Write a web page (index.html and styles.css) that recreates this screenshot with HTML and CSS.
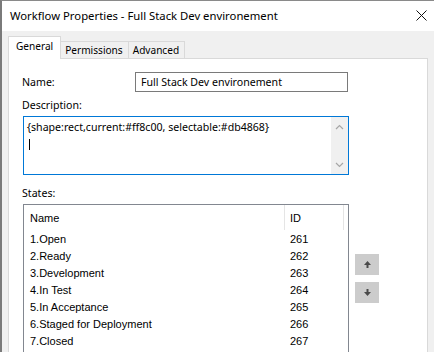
FILE: index.html
```html
<!DOCTYPE html>
<html>
<head>
<meta charset="utf-8">
<link rel="stylesheet" href="styles.css">
</head>
<body>
<div class="window">
  <div class="titlebar">
    <span class="title">Workflow Properties - Full Stack Dev environement</span>
    <svg class="close" width="11" height="11" viewBox="0 0 11 11"><path d="M0.5 0.5 L10.5 10.5 M10.5 0.5 L0.5 10.5" stroke="#111" stroke-width="1" fill="none"/></svg>
  </div>
  <div class="content">
    <div class="tabs">
      <div class="tab active">General</div>
      <div class="tab">Permissions</div>
      <div class="tab">Advanced</div>
    </div>
    <div class="panel">
      <div class="row name-row">
        <span class="label">Name:</span>
        <div class="input">Full Stack Dev environement</div>
      </div>
      <div class="label desc-label">Description:</div>
      <div class="textarea">
        <div class="ta-text">
          <div>{shape:rect,current:#ff8c00, selectable:#db4868}</div>
          <div class="caret-line"><span class="caret"></span></div>
        </div>
        <div class="vscroll">
          <svg width="9" height="6" viewBox="0 0 9 6"><path d="M1 5 L4.5 1.5 L8 5" stroke="#a6a6a6" stroke-width="1.2" fill="none"/></svg>
          <svg width="9" height="6" viewBox="0 0 9 6"><path d="M1 1 L4.5 4.5 L8 1" stroke="#a6a6a6" stroke-width="1.2" fill="none"/></svg>
        </div>
      </div>
      <div class="label states-label">States:</div>
      <div class="states">
        <div class="list">
          <div class="list-head">
            <div class="col-name">Name</div>
            <div class="col-id">ID</div>
            <div class="col-rest"></div>
          </div>
          <div class="list-row"><div class="col-name">1.Open</div><div class="col-id">261</div></div>
          <div class="list-row"><div class="col-name">2.Ready</div><div class="col-id">262</div></div>
          <div class="list-row"><div class="col-name">3.Development</div><div class="col-id">263</div></div>
          <div class="list-row"><div class="col-name">4.In Test</div><div class="col-id">264</div></div>
          <div class="list-row"><div class="col-name">5.In Acceptance</div><div class="col-id">265</div></div>
          <div class="list-row"><div class="col-name">6.Staged for Deployment</div><div class="col-id">266</div></div>
          <div class="list-row"><div class="col-name">7.Closed</div><div class="col-id">267</div></div>
          <div class="list-row"><div class="col-name">&nbsp;</div><div class="col-id"></div></div>
        </div>
        <div class="movers">
          <div class="mbtn"><svg width="9" height="9" viewBox="0 0 9 9"><path d="M4.5 1 L8 5 L5.5 5 L5.5 8 L3.5 8 L3.5 5 L1 5 Z" fill="#4a4a4a"/></svg></div>
          <div class="mbtn"><svg width="9" height="9" viewBox="0 0 9 9"><path d="M4.5 8 L8 4 L5.5 4 L5.5 1 L3.5 1 L3.5 4 L1 4 Z" fill="#4a4a4a"/></svg></div>
        </div>
      </div>
    </div>
  </div>
</div>
</body>
</html>
```
FILE: styles.css
```css
html, body {
  margin: 0;
  padding: 0;
}
body {
  width: 434px;
  height: 352px;
  overflow: hidden;
  background: #f0f0f0;
  font-family: "Noto Sans", "Open Sans", sans-serif;
  font-size: 10.6px;
  color: #000;
}
.window {
  height: 352px;
  border-left: 2px solid #7a7a7a;
  border-top: 1px solid #8a8a8a;
  box-sizing: border-box;
  background: #f0f0f0;
  overflow: hidden;
}
.titlebar {
  height: 30px;
  background: #fff;
  display: flex;
  align-items: center;
  justify-content: space-between;
  padding: 0 8px 0 8px;
}
.title {
  font-size: 11.3px;
  color: #000;
  padding-bottom: 1px;
}
.close {
  margin-right: -1px;
  margin-bottom: 1px;
}
.content {
  padding: 6px 6px 0 6px;
}
.tabs {
  display: flex;
  align-items: flex-end;
  height: 21px;
  position: relative;
  z-index: 1;
  font-size: 10.1px;
}
.tab {
  height: 16px;
  line-height: 17px;
  padding: 0 5px 0 4px;
  background: #f0f0f0;
  border: 1px solid #d9d9d9;
  border-bottom: none;
  margin-left: -1px;
}
.tab.active {
  line-height: 19px;
  background: #fff;
  padding: 0 7px;
  margin-left: 0;
  margin-bottom: -1px;
  height: 22px;
}
.panel {
  background: #fff;
  border: 1px solid #d9d9d9;
  height: 300px;
  padding: 13px 0 0 13px;
  box-sizing: border-box;
}
.row {
  display: flex;
  align-items: center;
}
.name-row {
  height: 20px;
}
.label {
  width: 113px;
}
.input {
  width: 206px;
  height: 18px;
  line-height: 18px;
  border: 1px solid #7a7a7a;
  padding-left: 5px;
}
.desc-label {
  margin-top: 5px;
  height: 17px;
  line-height: 17px;
}
.textarea {
  margin-top: 2px;
  margin-left: 1px;
  width: 324px;
  height: 57px;
  border: 1px solid #0078d7;
  display: flex;
}
.ta-text {
  flex: 1;
  padding: 2px 0 0 3px;
  line-height: 16px;
}
.caret {
  display: inline-block;
  width: 1px;
  height: 11px;
  background: #000;
  margin-left: 2px;
  vertical-align: middle;
}
.vscroll {
  width: 17px;
  background: #f0f0f0;
  display: flex;
  flex-direction: column;
  justify-content: space-between;
  align-items: center;
  padding: 7px 0 6px;
  box-sizing: border-box;
}
.states-label {
  margin-top: 10px;
  height: 17px;
  line-height: 17px;
}
.states {
  display: flex;
  margin-top: 2px;
  margin-left: 1px;
}
.list {
  width: 324px;
  height: 160px;
  border: 1px solid #828790;
  font-family: "Liberation Sans", Arial, sans-serif;
  font-size: 11px;
}
.list-head {
  display: flex;
  height: 25px;
  align-items: stretch;
}
.list-head > div {
  display: flex;
  align-items: center;
}
.list-head .col-name,
.list-head .col-id {
  border-right: 1px solid #e5e5e5;
}
.col-name {
  width: 261px;
  padding-left: 6px;
  box-sizing: border-box;
}
.col-id {
  width: 60px;
  padding-left: 5px;
  box-sizing: border-box;
}
.list-head .col-id {
  width: 59px;
}
.col-rest {
  flex: 1;
}
.list-row {
  display: flex;
  height: 17px;
  line-height: 17px;
}
.list-head + .list-row {
  margin-top: 1px;
}
.movers {
  display: flex;
  flex-direction: column;
  gap: 7px;
  margin-left: 6px;
  padding-top: 50px;
}
.mbtn {
  width: 24px;
  height: 21px;
  background: #cccccc;
  display: flex;
  align-items: center;
  justify-content: center;
}
```
